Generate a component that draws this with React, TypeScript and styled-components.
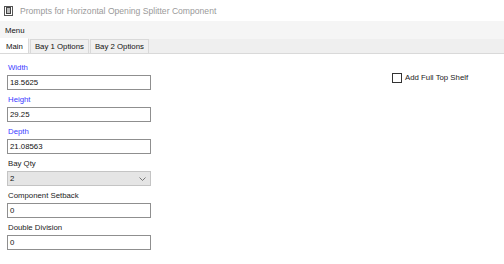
import React from "react";
import styled, { createGlobalStyle } from "styled-components";

const GlobalStyle = createGlobalStyle`
  html, body {
    margin: 0;
    padding: 0;
    background: #ffffff;
  }
  body {
    font-family: "Liberation Sans", Arial, sans-serif;
  }
  * {
    box-sizing: border-box;
  }
`;

const Window = styled.div`
  width: 504px;
  height: 264px;
  display: flex;
  flex-direction: column;
  background: #ffffff;
  overflow: hidden;
`;

const TitleBar = styled.div`
  height: 21px;
  display: flex;
  align-items: center;
  gap: 7px;
  padding-left: 4px;
  font-size: 8.6px;
  color: #9a9a9a;
`;

const MenuBar = styled.div`
  height: 18px;
  display: flex;
  align-items: center;
  padding-left: 5px;
  background: #f5f5f5;
  font-size: 7.8px;
  color: #111;
`;

const TabStrip = styled.div`
  height: 15px;
  display: flex;
  align-items: flex-end;
  background: #efefef;
  border-bottom: 1px solid #d9d9d9;
`;

const Tab = styled.div<{ $active?: boolean }>`
  height: ${({ $active }) => ($active ? "15px" : "14px")};
  display: flex;
  align-items: center;
  padding: 0 ${({ $active }) => ($active ? "5px" : "4px")};
  margin-left: ${({ $active }) => ($active ? "0" : "1px")};
  background: ${({ $active }) => ($active ? "#ffffff" : "#f0f0f0")};
  border: 1px solid #d9d9d9;
  border-bottom: none;
  border-top-color: ${({ $active }) => ($active ? "#ffffff" : "#d9d9d9")};
  border-left-color: ${({ $active }) => ($active ? "#ffffff" : "#d9d9d9")};
  font-size: 7.8px;
  color: #111;
`;

const Content = styled.div`
  flex: 1;
  display: flex;
  padding: 4px 0 0 7px;
`;

const FieldColumn = styled.div`
  width: 144px;
  display: flex;
  flex-direction: column;
`;

const Label = styled.div<{ $blue?: boolean }>`
  height: 17px;
  display: flex;
  align-items: center;
  padding: 1px 0 0 1px;
  font-size: 7.8px;
  color: ${({ $blue }) => ($blue ? "#3b3bff" : "#222")};
`;

const Input = styled.div`
  height: 15px;
  display: flex;
  align-items: center;
  padding-left: 2px;
  border: 1px solid #8f8f8f;
  background: #ffffff;
  font-size: 7.8px;
  color: #111;
`;

const Select = styled(Input)`
  justify-content: space-between;
  padding-right: 4px;
  background: #e5e5e5;
  border-color: #c4c4c4;
`;

const CheckArea = styled.div`
  margin-left: 241px;
  padding-top: 15px;
  display: flex;
  align-items: flex-start;
  gap: 3px;
  font-size: 7.8px;
  color: #222;
`;

const Box = styled.div`
  width: 10px;
  height: 10px;
  border: 1px solid #333;
  background: #fff;
`;

const fields = [
  { label: "Width", value: "18.5625" },
  { label: "Height", value: "29.25" },
  { label: "Depth", value: "21.08563" },
];

const extra = [
  { label: "Component Setback", value: "0" },
  { label: "Double Division", value: "0" },
];

export default function App() {
  return (
    <Window>
      <GlobalStyle />
      <TitleBar>
        <svg width="9" height="10" viewBox="0 0 9 10">
          <rect x="0.5" y="0.5" width="8" height="9" fill="#fff" stroke="#555" />
          <rect x="2.5" y="1.5" width="4" height="6" fill="#bbb" stroke="#444" />
        </svg>
        Prompts for Horizontal Opening Splitter Component
      </TitleBar>
      <MenuBar>Menu</MenuBar>
      <TabStrip>
        <Tab $active>Main</Tab>
        <Tab>Bay 1 Options</Tab>
        <Tab>Bay 2 Options</Tab>
      </TabStrip>
      <Content>
        <FieldColumn>
          {fields.map((f) => (
            <React.Fragment key={f.label}>
              <Label $blue>{f.label}</Label>
              <Input>{f.value}</Input>
            </React.Fragment>
          ))}
          <Label>Bay Qty</Label>
          <Select>
            <span>2</span>
            <svg width="7" height="4" viewBox="0 0 7 4">
              <path d="M0.5 0.5 L3.5 3.5 L6.5 0.5" fill="none" stroke="#777" />
            </svg>
          </Select>
          {extra.map((f) => (
            <React.Fragment key={f.label}>
              <Label>{f.label}</Label>
              <Input>{f.value}</Input>
            </React.Fragment>
          ))}
        </FieldColumn>
        <CheckArea>
          <Box />
          Add Full Top Shelf
        </CheckArea>
      </Content>
    </Window>
  );
}
